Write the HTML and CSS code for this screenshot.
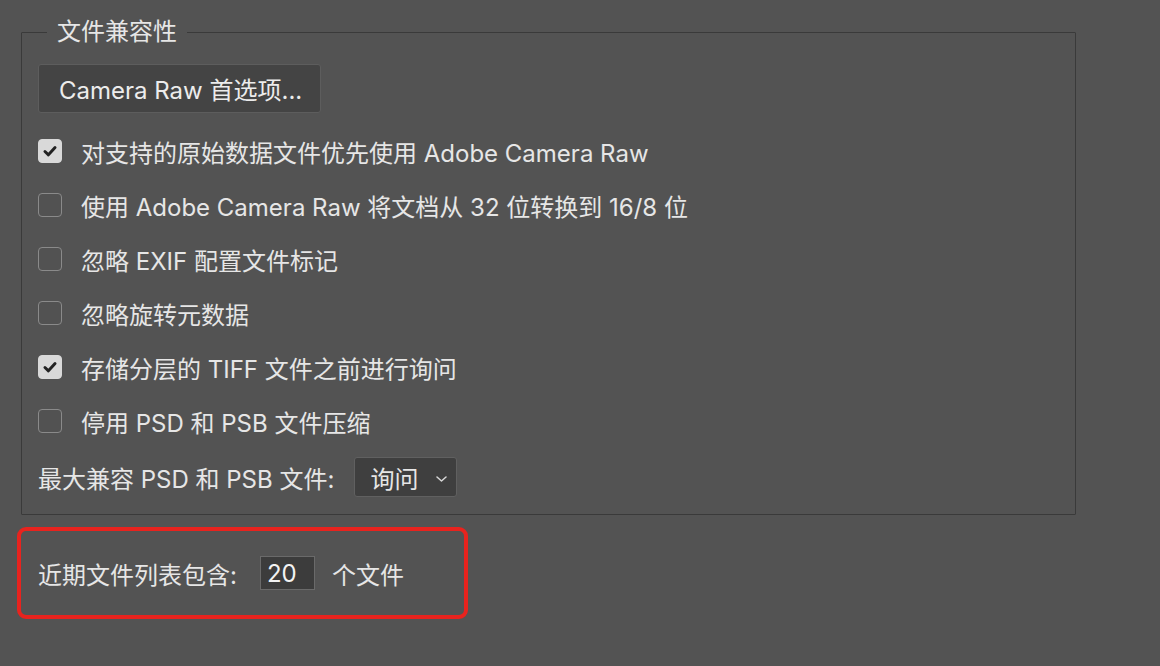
FILE: index.html
```html
<!DOCTYPE html>
<html lang="zh-CN">
<head>
<meta charset="utf-8">
<title>文件兼容性</title>
<link rel="stylesheet" href="styles.css">
</head>
<body>
<div class="page">
  <fieldset class="group">
    <legend class="group-title">文件兼容性</legend>
    <div class="btn-row">
      <button class="btn" type="button">Camera Raw 首选项...</button>
    </div>
    <label class="check-row">
      <span class="box checked"><svg viewBox="0 0 24 24" width="24" height="24"><path d="M6.5 12.5 L10.3 16.2 L17.5 8.2" fill="none" stroke="#222" stroke-width="3.2" stroke-linecap="round" stroke-linejoin="round"/></svg></span>
      <span class="check-text">对支持的原始数据文件优先使用 Adobe Camera Raw</span>
    </label>
    <label class="check-row">
      <span class="box"></span>
      <span class="check-text">使用 Adobe Camera Raw 将文档从 32 位转换到 16/8 位</span>
    </label>
    <label class="check-row">
      <span class="box"></span>
      <span class="check-text">忽略 EXIF 配置文件标记</span>
    </label>
    <label class="check-row">
      <span class="box"></span>
      <span class="check-text">忽略旋转元数据</span>
    </label>
    <label class="check-row">
      <span class="box checked"><svg viewBox="0 0 24 24" width="24" height="24"><path d="M6.5 12.5 L10.3 16.2 L17.5 8.2" fill="none" stroke="#222" stroke-width="3.2" stroke-linecap="round" stroke-linejoin="round"/></svg></span>
      <span class="check-text">存储分层的 TIFF 文件之前进行询问</span>
    </label>
    <label class="check-row">
      <span class="box"></span>
      <span class="check-text">停用 PSD 和 PSB 文件压缩</span>
    </label>
    <div class="select-row">
      <span class="select-label">最大兼容 PSD 和 PSB 文件:</span>
      <span class="select">
        <span class="select-value">询问</span>
        <svg class="chev" viewBox="0 0 11 6" width="11" height="6"><path d="M1 1 L5.5 5 L10 1" fill="none" stroke="#d8d8d8" stroke-width="1.5" stroke-linecap="round" stroke-linejoin="round"/></svg>
      </span>
    </div>
  </fieldset>

  <div class="recent">
    <span class="recent-label">近期文件列表包含:</span>
    <span class="num-input">20</span>
    <span class="recent-unit">个文件</span>
  </div>
</div>
</body>
</html>
```

FILE: styles.css
```css
html, body {
  margin: 0;
  padding: 0;
  background: #535353;
}

body {
  font-family: "Inter", "Noto Sans CJK SC", sans-serif;
  font-size: 24px;
  color: #e6e6e6;
  width: 1160px;
  height: 666px;
  overflow: hidden;
}

.page {
  padding: 17px 0 0 0;
  display: flex;
  flex-direction: column;
  align-items: flex-start;
}

.group {
  box-sizing: border-box;
  width: 1055px;
  margin: 0 0 0 21px;
  padding: 17px 16px 10px 16px;
  border: 1px solid #3a3a3a;
  border-radius: 1px;
  display: flex;
  flex-direction: column;
  align-items: flex-start;
}

.group-title {
  margin-left: 9px;
  padding: 0 10px;
  line-height: 30px;
}

.btn-row {
  display: flex;
  margin-bottom: 11px;
}

.btn {
  box-sizing: border-box;
  width: 283px;
  height: 49px;
  background: #444444;
  border: 1px solid #5d5d5d;
  border-radius: 3px;
  color: #ececec;
  font: inherit;
  padding: 0 0 0 20px;
  text-align: left;
  display: flex;
  align-items: center;
}

.check-row {
  height: 54px;
  display: flex;
  align-items: center;
  gap: 19px;
}

.box {
  box-sizing: border-box;
  width: 24px;
  height: 24px;
  border: 1.5px solid #8a8a8a;
  border-radius: 4px;
  background: #525252;
  display: flex;
  align-items: center;
  justify-content: center;
  flex: none;
}

.box.checked {
  background: #d9d9d9;
  border-color: #d9d9d9;
}

.box svg {
  display: block;
}

.select-row {
  height: 54px;
  margin-top: 2px;
  display: flex;
  align-items: center;
  gap: 20px;
}

.select {
  box-sizing: border-box;
  width: 103px;
  height: 40px;
  background: #3f3f3f;
  border: 1px solid #606060;
  border-radius: 3px;
  display: flex;
  align-items: center;
  justify-content: space-between;
  padding: 0 9px 0 15px;
}

.chev {
  display: block;
  margin-top: 4px;
}

.recent {
  box-sizing: border-box;
  width: 451px;
  height: 92px;
  margin: 12px 0 0 17px;
  border: 4px solid #e8231e;
  border-radius: 9px;
  padding-left: 17px;
  display: flex;
  align-items: center;
}

.num-input {
  box-sizing: border-box;
  width: 55px;
  height: 34px;
  margin: 0 17px 0 23px;
  background: #3c3c3c;
  border: 1px solid #6a6a6a;
  padding-left: 6px;
  display: flex;
  align-items: center;
  color: #f2f2f2;
}
```
